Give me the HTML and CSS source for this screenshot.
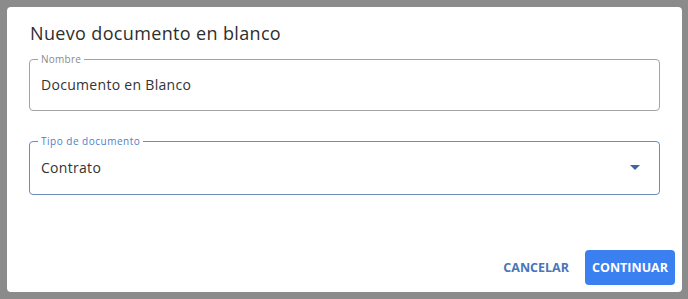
FILE: index.html
```html
<!DOCTYPE html>
<html lang="es">
<head>
<meta charset="utf-8">
<link rel="stylesheet" href="styles.css">
</head>
<body>
<div class="backdrop">
  <div class="dialog">
    <h2 class="title">Nuevo documento en blanco</h2>
    <div class="fields">
      <div class="field field-name">
        <span class="label">Nombre</span>
        <span class="value">Documento en Blanco</span>
      </div>
      <div class="field field-type">
        <span class="label">Tipo de documento</span>
        <span class="value">Contrato</span>
        <svg class="arrow" width="10" height="5" viewBox="0 0 10 5"><path d="M0 0 L10 0 L5 5 Z" fill="#3d64a3"/></svg>
      </div>
    </div>
    <div class="actions">
      <button class="btn btn-text">CANCELAR</button>
      <button class="btn btn-primary">CONTINUAR</button>
    </div>
  </div>
</div>
</body>
</html>
```
FILE: styles.css
```css
html, body {
  margin: 0;
  padding: 0;
}
body {
  width: 688px;
  height: 299px;
  background: #8b8b8b;
  font-family: "Open Sans", "DejaVu Sans", sans-serif;
  overflow: hidden;
}
.backdrop {
  padding: 7px 6px 7px 7px;
}
.dialog {
  box-sizing: border-box;
  width: 675px;
  height: 285px;
  background: #fff;
  border-radius: 4px;
  display: flex;
  flex-direction: column;
  padding: 13px 7px 7px 22px;
}
.title {
  margin: 0 0 0 1px;
  font-size: 18px;
  line-height: 27px;
  font-weight: 400;
  color: #2e2e2e;
  letter-spacing: 0.35px;
}
.fields {
  display: flex;
  flex-direction: column;
  gap: 30px;
  margin-top: 12px;
  width: 631px;
}
.field {
  position: relative;
  box-sizing: border-box;
  border: 1px solid #a3a3a3;
  border-radius: 4px;
  display: flex;
  align-items: center;
  padding: 0 11px;
}
.field-name {
  height: 52px;
}
.field-type {
  height: 54px;
  border-color: #6b8db8;
}
.label {
  position: absolute;
  top: -8px;
  left: 8px;
  padding: 0 3px;
  background: #fff;
  font-size: 10px;
  line-height: 14px;
  color: #8a8a8a;
  letter-spacing: 0.25px;
}
.field-type .label {
  color: #4c7fcc;
  letter-spacing: 0.5px;
}
.value {
  font-size: 14px;
  color: #333;
  letter-spacing: 0.3px;
  margin-top: -1px;
}
.arrow {
  position: absolute;
  right: 19px;
  top: 23px;
}
.actions {
  margin-top: auto;
  display: flex;
  justify-content: flex-end;
  align-items: center;
  gap: 8px;
}
.btn {
  font-family: "Open Sans", "DejaVu Sans", sans-serif;
  font-size: 12.5px;
  font-weight: 700;
  border: none;
  border-radius: 4px;
  height: 35px;
  cursor: pointer;
}
.btn-text {
  background: transparent;
  color: #4a75b6;
  padding: 0 8px;
}
.btn-primary {
  background: #3b80f0;
  color: #fff;
  width: 90px;
  padding: 0;
}
```
